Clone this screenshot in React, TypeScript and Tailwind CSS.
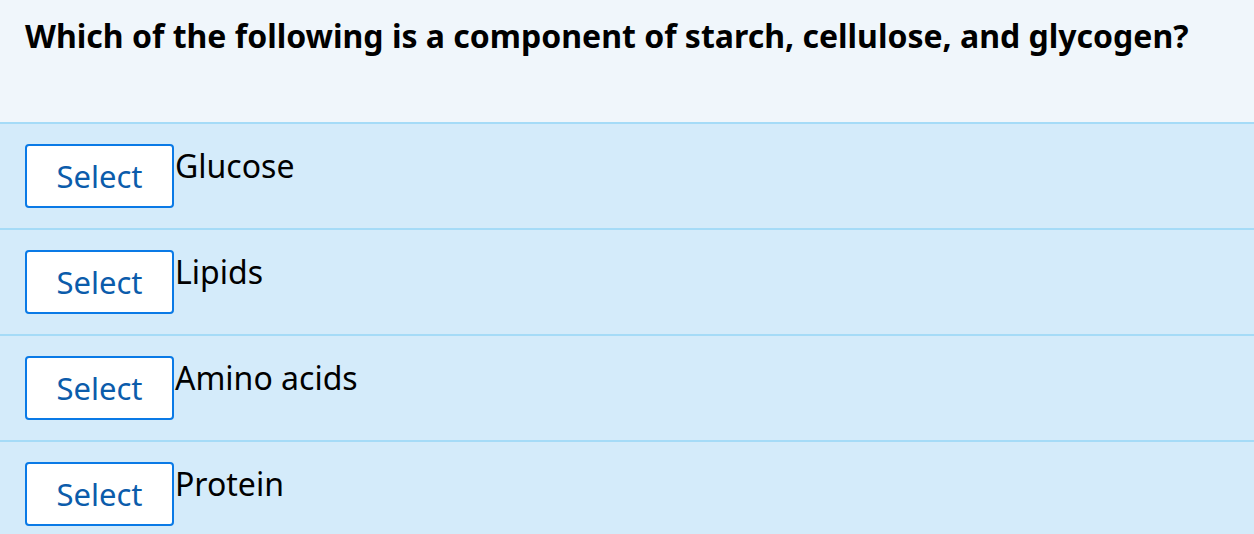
const options = ["Glucose", "Lipids", "Amino acids", "Protein"];

export default function App() {
  return (
    <div
      className="min-h-screen w-full bg-[#d4ebfa]"
      style={{ fontFamily: "'Noto Sans', 'Open Sans', sans-serif" }}
    >
      <div className="h-[122px] bg-[#f0f6fb] px-[25px] pt-[12px]">
        <h1 className="text-[32px] leading-[48px] font-bold text-black">
          Which of the following is a component of starch, cellulose, and glycogen?
        </h1>
      </div>
      {options.map((opt) => (
        <div
          key={opt}
          className="flex items-start border-t-2 border-[#a5dbf7] h-[106px] py-[20px] pl-[25px]"
        >
          <button className="h-[64px] w-[149px] shrink-0 rounded-[4px] border-2 border-[#0a7ae6] bg-white text-[31px] text-[#0b5cab]">
            Select
          </button>
          <span className="ml-px text-[32px] leading-[44px] text-black">{opt}</span>
        </div>
      ))}
    </div>
  );
}
